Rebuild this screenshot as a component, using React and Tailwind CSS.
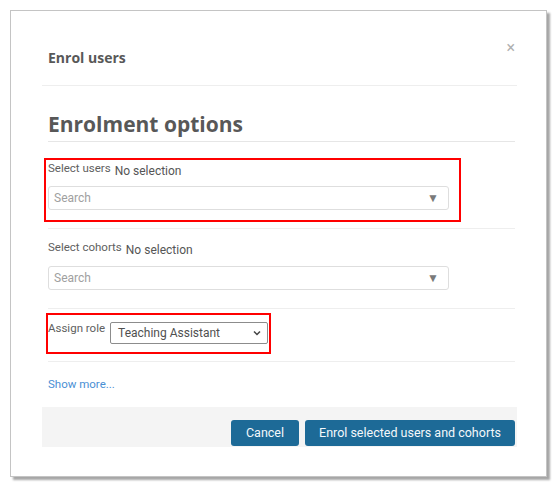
import React from 'react';

const sans = { fontFamily: 'Roboto, "Liberation Sans", Arial, sans-serif' };
const open = { fontFamily: '"Open Sans", "Liberation Sans", Arial, sans-serif' };

const SearchBox = () => (
  <div className="w-[401px] h-[24px] border border-[#dedede] rounded-[3px] flex items-center justify-between pl-[5px] pr-[9px] bg-white">
    <span className="text-[12px] text-[#a0a0a0]">Search</span>
    <span className="text-[12px] text-[#7a7a7a] leading-none">▼</span>
  </div>
);

const SelectLabel = ({ label }) => (
  <div className="flex items-start h-[16px] leading-[16px]">
    <span className="text-[11.5px] text-[#606060]">{label}</span>
    <span className="text-[12px] text-[#555555] ml-[4px] mt-[3px]">No selection</span>
  </div>
);

const App = () => {
  return (
    <div className="pt-[10px] pl-[10px] bg-white min-h-[489px]" style={sans}>
      <div className="w-[537px] h-[467px] bg-white border border-[#c4c4c4] shadow-[3px_3px_2px_rgba(0,0,0,0.35)] pl-[31px] pr-[29px] flex flex-col">
        {/* Header */}
        <div className="flex items-start justify-between pt-[29px] pb-[17px] pl-[6px] pr-[2px] border-b border-[#eeeeee]">
          <h2 className="mt-[8px] text-[14px] leading-[20px] font-bold text-[#585858]" style={open}>
            Enrol users
          </h2>
          <button className="text-[16px] leading-[16px] text-[#b0b0b0]">×</button>
        </div>

        {/* Body */}
        <div className="pl-[6px] pr-[2px]">
          <h3
            className="mt-[24px] pb-[3px] text-[21px] leading-[28px] font-bold text-[#585858] border-b border-[#e6e6e6]"
            style={open}
          >
            Enrolment options
          </h3>

          <div className="pt-[16px] pb-[6px] border-b border-[#eeeeee]">
            <div className="ml-[-4px] w-[417px] border-2 border-[#ff0000] pl-[2px] pb-[10px]">
              <SelectLabel label="Select users" />
              <div className="mt-[10px]">
                <SearchBox />
              </div>
            </div>
          </div>

          <div className="pt-[10px] pb-[18px] border-b border-[#eeeeee]">
            <SelectLabel label="Select cohorts" />
            <div className="mt-[11px]">
              <SearchBox />
            </div>
          </div>

          <div className="pt-[4px] pb-[7px] border-b border-[#eeeeee]">
            <div className="ml-[-2px] w-[225px] border-2 border-[#ff0000] pt-[5px] pb-[8px] flex items-start gap-[5px]">
              <span className="text-[11.5px] leading-[16px] text-[#606060]">Assign role</span>
              <div className="mt-[2px] w-[158px] h-[22px] border border-[#8c8c8c] rounded-[2px] flex items-center justify-between pl-[7px] pr-[6px]">
                <span className="text-[12px] text-[#505050]">Teaching Assistant</span>
                <svg width="8" height="6" viewBox="0 0 8 6" fill="none">
                  <path d="M1 1.5l3 3 3-3" stroke="#444" strokeWidth="1.5" />
                </svg>
              </div>
            </div>
          </div>

          <div className="mt-[14px] mb-[15px] text-[11.5px] leading-[16px] text-[#4a8fd4]">Show more...</div>
        </div>

        {/* Footer */}
        <div className="h-[40px] bg-[#f4f4f4] flex items-end justify-end gap-[6px] pr-[2px] pb-[1px]">
          <button className="h-[26px] w-[68px] rounded-[3px] bg-[#1d6a97] text-[#f4f8fb] text-[12.5px]">Cancel</button>
          <button className="h-[26px] w-[210px] rounded-[3px] bg-[#1d6a97] text-[#f4f8fb] text-[12.5px]">
            Enrol selected users and cohorts
          </button>
        </div>
      </div>
    </div>
  );
};

export default App;
